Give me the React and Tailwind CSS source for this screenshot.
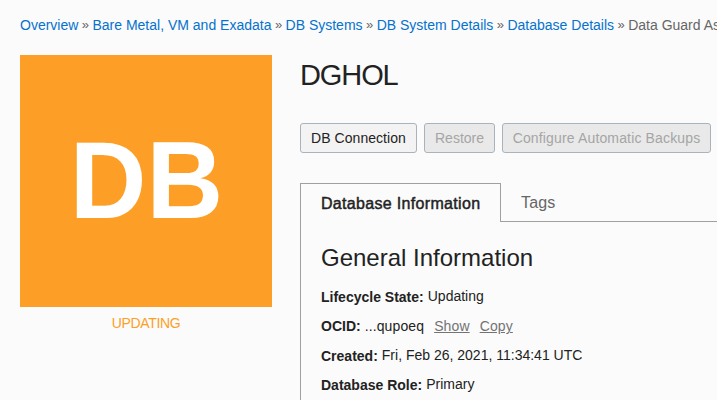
const crumbs = [
  'Overview',
  'Bare Metal, VM and Exadata',
  'DB Systems',
  'DB System Details',
  'Database Details',
];

const buttons = [
  { label: 'DB Connection', style: 'w-[117px] bg-[#f3f3f3] text-[#222222] tracking-[0.05px]' },
  { label: 'Restore', style: 'w-[71px] bg-[#e9e9e9] text-[#a5a5a5]', disabled: true },
  {
    label: 'Configure Automatic Backups',
    style: 'w-[209px] bg-[#e9e9e9] text-[#a5a5a5] tracking-[0.15px]',
    disabled: true,
  },
];

function Field({ label, valueStyle = 'pb-[2px]', children }) {
  return (
    <div className="flex h-[29.33px] items-center">
      <dt className="mr-1 font-bold">{label}:</dt>
      <dd className={`flex ${valueStyle}`}>{children}</dd>
    </div>
  );
}

export default function App() {
  return (
    <div className="h-[400px] w-[717px] overflow-hidden bg-[#fbfbfb] pl-5 font-['Liberation_Sans',Arial,sans-serif] text-sm whitespace-nowrap text-[#222222]">
      <nav className="flex h-[55px] pt-[15px] text-[#666666]">
        {crumbs.map((crumb) => (
          <span key={crumb} className="flex">
            <a className="text-[#0572ce]">{crumb}</a>
            <span className="w-[14.1px] pt-px text-center text-[13px]">»</span>
          </span>
        ))}
        <span>Data Guard Associations</span>
      </nav>

      <div className="flex">
        <aside className="mr-7 w-[252px] shrink-0 text-center">
          <div className="flex h-[252px] items-center justify-center bg-[#fd9f27] text-[110px] leading-none font-bold text-white">
            <span className="mt-[-3px] scale-x-[0.965]">DB</span>
          </div>
          <div className="pt-[6px] tracking-[-0.35px] text-[#fd9f27]">UPDATING</div>
        </aside>

        <main className="w-[417px] shrink-0">
          <h1 className="h-[68px] pt-[2px] text-[29px] leading-9 tracking-[-1.1px]">DGHOL</h1>
          <div className="flex gap-[7px]">
            {buttons.map((b) => (
              <button
                key={b.label}
                disabled={b.disabled}
                className={`h-[30px] rounded-[3px] border border-[#a9b3bc] ${b.style}`}
              >
                {b.label}
              </button>
            ))}
          </div>

          <div className="mt-[30px] flex h-[39px] text-base">
            <div className="w-[201px] border-x border-t border-[#a0a0a0] pt-2 pl-5 tracking-[0.32px] [-webkit-text-stroke:0.45px_#222222]">
              Database Information
            </div>
            <div className="flex-1 border-b border-[#a0a0a0] pt-2 pl-5 tracking-[0.15px] text-[#666666]">Tags</div>
          </div>

          <section className="h-[178px] border-l border-[#a0a0a0] pl-5">
            <h2 className="h-[60.2px] pt-5 text-2xl leading-8">General Information</h2>
            <dl>
              <Field label="Lifecycle State">Updating</Field>
              <Field label="OCID" valueStyle="tracking-[0.12px]">
                ...qupoeq
                <a className="ml-[10px] text-[#737373] underline">Show</a>
                <a className="ml-[10px] text-[#737373] underline">Copy</a>
              </Field>
              <Field label="Created">Fri, Feb 26, 2021, 11:34:41 UTC</Field>
              <Field label="Database Role">Primary</Field>
            </dl>
          </section>
        </main>
      </div>
    </div>
  );
}
